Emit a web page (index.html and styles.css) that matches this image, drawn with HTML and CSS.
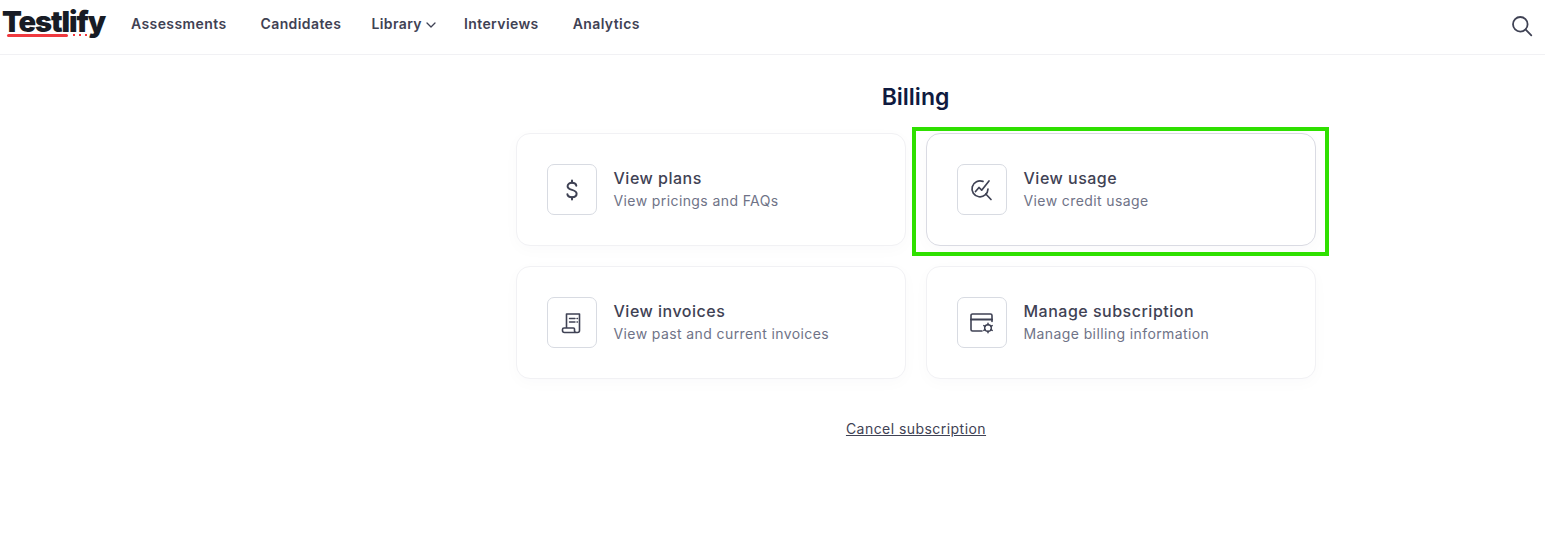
FILE: index.html
```html
<!DOCTYPE html>
<html lang="en">
<head>
<meta charset="utf-8">
<title>Billing</title>
<link rel="stylesheet" href="styles.css">
</head>
<body>
<header class="topbar">
  <a class="logo"><span class="logo-text">Testlify</span><span class="logo-line"></span><span class="logo-dots"><i></i><i></i><i></i></span></a>
  <nav class="nav">
    <a class="nav-link">Assessments</a>
    <a class="nav-link">Candidates</a>
    <a class="nav-link nav-lib">Library<svg class="chev" width="10" height="6" viewBox="0 0 10 6"><path d="M1 1l4 4 4-4" fill="none" stroke="#3f4254" stroke-width="1.3" stroke-linecap="round" stroke-linejoin="round"/></svg></a>
    <a class="nav-link">Interviews</a>
    <a class="nav-link">Analytics</a>
  </nav>
  <svg class="search" width="22" height="22" viewBox="0 0 22 22"><circle cx="9.3" cy="9.3" r="7.3" fill="none" stroke="#3f4254" stroke-width="1.8"/><path d="M14.7 14.7l5.6 5.6" stroke="#3f4254" stroke-width="1.8" stroke-linecap="round"/></svg>
</header>
<main class="main">
  <h1 class="title">Billing</h1>
  <section class="grid">
    <a class="card">
      <span class="icon-box"><svg width="24" height="24" viewBox="0 0 24 24" fill="none" stroke="#3f4254" stroke-width="2" stroke-linecap="round" stroke-linejoin="round"><path d="M12 2.500v2.300M12 19.200v2.300"/><path d="M16.300 7.700C16 5.800 14.300 4.800 12 4.800c-2.600 0-4.400 1.300-4.400 3.400 0 2.200 1.900 3 4.400 3.700 2.700.8 4.600 1.600 4.600 3.900 0 2.200-1.900 3.400-4.600 3.400-2.500 0-4.400-1-4.600-3"/></svg></span>
      <span class="card-text"><span class="card-title">View plans</span><span class="card-sub">View pricings and FAQs</span></span>
    </a>
    <a class="card card-active">
      <span class="icon-box"><svg width="24" height="24" viewBox="0 0 24 24" fill="none" stroke="#3f4254" stroke-width="1.700" stroke-linecap="round" stroke-linejoin="round"><path d="M13 3.400A8 8 0 1 0 18 11"/><path d="M5.500 13.500l3.500-4 2.700 2.700L19 3"/><path d="M15.800 16l5.200 5.500"/></svg></span>
      <span class="card-text"><span class="card-title">View usage</span><span class="card-sub">View credit usage</span></span>
      <span class="highlight"></span>
    </a>
    <a class="card">
      <span class="icon-box"><svg width="24" height="24" viewBox="0 0 24 24" fill="none" stroke="#3f4254" stroke-width="1.600" stroke-linecap="round" stroke-linejoin="round"><path d="M6.500 17V3h13v16.500a2 2 0 0 1-2 2H4.500a2 2 0 0 1-2-2v-1a1.500 1.500 0 0 1 1.500-1.500h9.500a1 1 0 0 1 1 1v1.500a2 2 0 0 0 2 2"/><path d="M9.500 7.500h5.500M17 7.500h.5M9.500 11h5.500M17 11h.5" stroke-width="1.400"/></svg></span>
      <span class="card-text"><span class="card-title">View invoices</span><span class="card-sub">View past and current invoices</span></span>
    </a>
    <a class="card">
      <span class="icon-box"><svg width="24" height="24" viewBox="0 0 24 24" fill="none" stroke="#3f4254" stroke-width="1.600" stroke-linecap="round" stroke-linejoin="round"><path d="M12 20H2.500A1.500 1.500 0 0 1 1 18.500v-14A1.500 1.500 0 0 1 2.500 3h18A1.500 1.500 0 0 1 22 4.500v6"/><path d="M1 8.500h21" stroke-width="2"/><circle cx="18" cy="17" r="3.300" stroke-width="1.500"/><path d="M18 12.200v1.500M18 20.300v1.500M13.800 14.600l1.300.7M20.900 18.700l1.300.7M13.800 19.400l1.300-.7M20.900 15.300l1.300-.7" stroke-width="1.500"/></svg></span>
      <span class="card-text"><span class="card-title">Manage subscription</span><span class="card-sub">Manage billing information</span></span>
    </a>
  </section>
  <a class="cancel">Cancel subscription</a>
</main>
</body>
</html>
```
FILE: styles.css
```css
* { box-sizing: border-box; }
html, body { margin: 0; padding: 0; }
body {
  width: 1545px;
  height: 558px;
  overflow: hidden;
  background: #fff;
  font-family: "Inter", "Open Sans", sans-serif;
  color: #3f4254;
}
.topbar {
  height: 55px;
  border-bottom: 1px solid #f1f1f4;
  display: flex;
  align-items: center;
  padding: 0 12px 6px 2px;
}
.logo {
  position: relative;
  display: block;
  width: 103px;
  height: 38px;
  color: #181c25;
  flex: none;
  margin-top: 4px;
}
.logo-text {
  display: block;
  font-size: 29px;
  font-weight: 900;
  line-height: 36px;
  letter-spacing: -1.1px;
  margin-top: -3px;
}
.logo-line {
  position: absolute;
  left: 5px;
  top: 27px;
  width: 61px;
  height: 3px;
  border-radius: 2px;
  background: #f0393f;
}
.logo-dots {
  position: absolute;
  left: 71px;
  top: 27px;
  display: flex;
  gap: 4px;
}
.logo-dots i {
  width: 2px;
  height: 2px;
  background: #f0393f;
}
.nav {
  display: flex;
  align-items: center;
  margin-left: 26px;
  gap: 34px;
  flex: 1;
}
.nav-link {
  font-size: 14px;
  font-weight: 600;
  line-height: 20px;
  letter-spacing: 0.4px;
  color: #3f4254;
  display: flex;
  align-items: center;
  gap: 4px;
}
.nav-lib { margin-left: -4px; margin-right: -6px; }
.chev { margin-top: 2px; }
.search { flex: none; margin-top: 4px; }
.main {
  padding-left: 286px;
  display: flex;
  flex-direction: column;
  align-items: center;
}
.title {
  margin: 26px 0 19px;
  font-size: 23px;
  line-height: 33px;
  font-weight: 600;
  color: #0f1a40;
  height: 33px;
}
.grid {
  width: 800px;
  display: grid;
  grid-template-columns: 390px 390px;
  grid-auto-rows: 113px;
  gap: 20px;
}
.card {
  position: relative;
  display: flex;
  align-items: center;
  gap: 16px;
  padding: 0 30px;
  background: #fff;
  border: 1px solid #f1f1f4;
  border-radius: 14px;
  box-shadow: 0 4px 16px rgba(40, 40, 80, 0.025);
}
.card-active { border-color: #dadbe3; }
.icon-box {
  flex: none;
  width: 50px;
  height: 51px;
  border: 1px solid #d8dbe2;
  border-radius: 7px;
  display: flex;
  align-items: center;
  justify-content: center;
}
.card-text { display: flex; flex-direction: column; padding: 0 0 2px 1px; }
.card-title {
  font-size: 16px;
  line-height: 24px;
  font-weight: 500;
  letter-spacing: 0.5px;
  color: #3f4254;
}
.card-sub {
  font-size: 14px;
  line-height: 21px;
  letter-spacing: 0.4px;
  color: #6f7387;
}
.highlight {
  position: absolute;
  left: -15px;
  top: -7px;
  width: 417px;
  height: 129px;
  border: 4px solid #2fe000;
  pointer-events: none;
}
.cancel {
  margin: 39px 0 0 1px;
  font-size: 14px;
  line-height: 21px;
  letter-spacing: 0.45px;
  color: #3f4254;
  text-decoration: underline;
}
```
